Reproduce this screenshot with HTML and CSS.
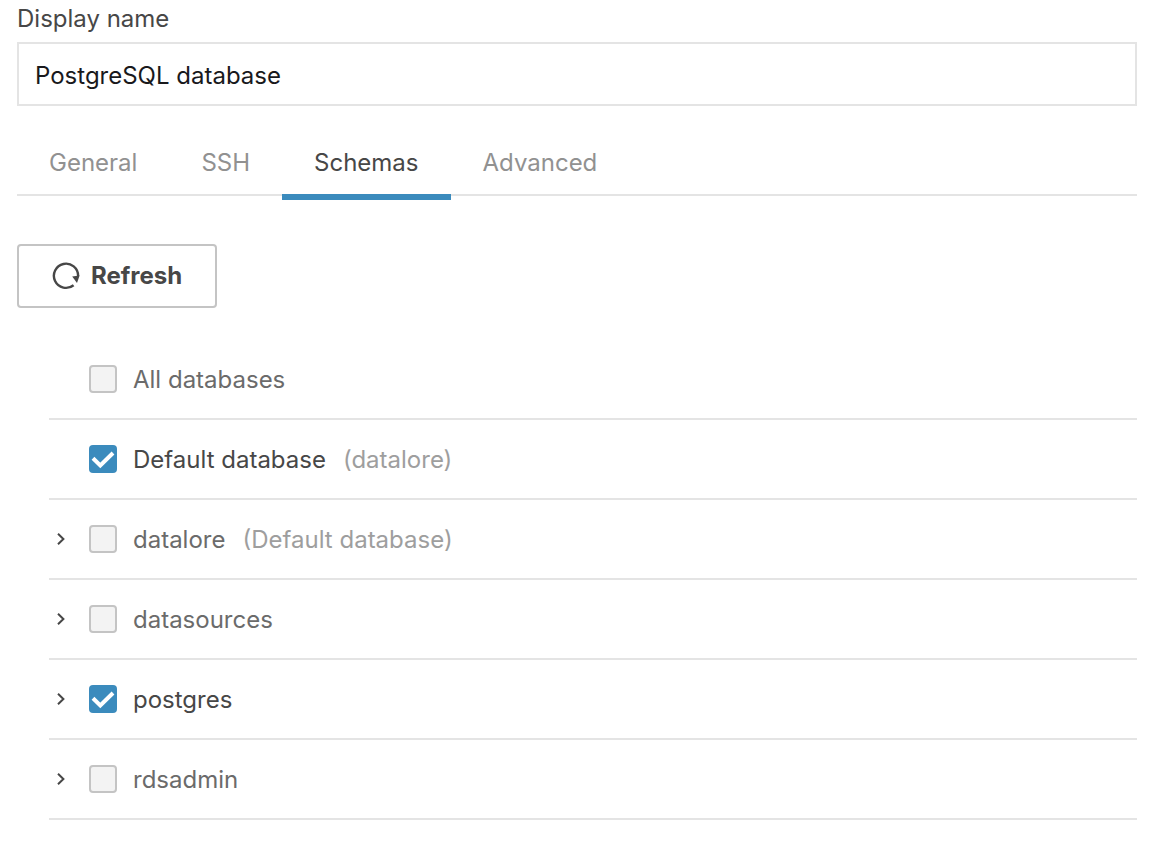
FILE: index.html
```html
<!DOCTYPE html>
<html lang="en">
<head>
<meta charset="utf-8">
<meta name="viewport" content="width=device-width, initial-scale=1">
<title>PostgreSQL database</title>
<link rel="stylesheet" href="styles.css">
</head>
<body>
<svg class="sprite" aria-hidden="true">
  <symbol id="chevron" viewBox="0 0 8 12"><path d="M1 .8 6.4 6 1 11.2" fill="none" stroke="currentColor" stroke-width="2"/></symbol>
</svg>
<main class="panel">
  <label class="field-label" for="display-name">Display name</label>
  <input class="field-input" id="display-name" type="text" value="PostgreSQL database">

  <div class="tabs" role="tablist">
    <button class="tab" type="button" role="tab" aria-selected="false">General</button>
    <button class="tab" type="button" role="tab" aria-selected="false">SSH</button>
    <button class="tab tab-active" type="button" role="tab" aria-selected="true">Schemas</button>
    <button class="tab" type="button" role="tab" aria-selected="false">Advanced</button>
  </div>

  <button class="refresh" type="button">
    <svg class="refresh-icon" viewBox="0 0 28 28" aria-hidden="true">
      <path d="M21.6 23.2A12.1 12.1 0 1 1 26.1 14" fill="none" stroke="currentColor" stroke-width="2.4"/>
      <path d="M20.2 14.4 27.6 13.4 25 21Z" fill="currentColor"/>
    </svg>
    Refresh
  </button>

  <ul class="schemas">
    <li class="row">
      <span class="toggle"></span>
      <input class="check" type="checkbox" id="db-all">
      <label class="name" for="db-all">All databases</label>
    </li>
    <li class="row">
      <span class="toggle"></span>
      <input class="check" type="checkbox" id="db-default" checked>
      <label class="name" for="db-default">Default database</label>
      <span class="note">(datalore)</span>
    </li>
    <li class="row">
      <button class="toggle" type="button" aria-label="Expand datalore"><svg class="chevron"><use href="#chevron"/></svg></button>
      <input class="check" type="checkbox" id="db-datalore">
      <label class="name" for="db-datalore">datalore</label>
      <span class="note">(Default database)</span>
    </li>
    <li class="row">
      <button class="toggle" type="button" aria-label="Expand datasources"><svg class="chevron"><use href="#chevron"/></svg></button>
      <input class="check" type="checkbox" id="db-datasources">
      <label class="name" for="db-datasources">datasources</label>
    </li>
    <li class="row">
      <button class="toggle" type="button" aria-label="Expand postgres"><svg class="chevron"><use href="#chevron"/></svg></button>
      <input class="check" type="checkbox" id="db-postgres" checked>
      <label class="name" for="db-postgres">postgres</label>
    </li>
    <li class="row">
      <button class="toggle" type="button" aria-label="Expand rdsadmin"><svg class="chevron"><use href="#chevron"/></svg></button>
      <input class="check" type="checkbox" id="db-rdsadmin">
      <label class="name" for="db-rdsadmin">rdsadmin</label>
    </li>
  </ul>
</main>
</body>
</html>
```

FILE: styles.css
```css
* {
  box-sizing: border-box;
}

body {
  margin: 0;
  background: #fff;
  color: #474747;
  font: 24px/32px Inter, "Liberation Sans", sans-serif;
}

button,
input {
  font: inherit;
  color: inherit;
}

.sprite {
  display: none;
}

.panel {
  display: flex;
  flex-direction: column;
  padding: 3px 31px 32px 17px;
}

.field-label {
  margin-bottom: 7px;
}

.field-input {
  width: 100%;
  height: 64px;
  padding: 2px 16px 0;
  border: 2px solid #e4e4e4;
  border-radius: 0;
  background: #fff;
  color: #19191c;
}

.tabs {
  display: flex;
  margin-top: 24px;
  border-bottom: 2px solid #e4e4e4;
}

.tab {
  height: 70px;
  margin-bottom: -6px;
  padding: 2px 32px 0;
  border: 0;
  border-bottom: 6px solid transparent;
  background: none;
  color: #919191;
}

.tab-active {
  border-bottom-color: #3b8bbd;
  color: #474747;
}

.refresh {
  display: flex;
  align-items: center;
  align-self: flex-start;
  gap: 11px;
  height: 64px;
  margin-top: 48px;
  padding: 0 33px;
  border: 2px solid #c4c4c4;
  border-radius: 4px;
  background: #fff;
  font-weight: 700;
}

.refresh-icon {
  width: 28px;
  height: 28px;
}

.schemas {
  margin: 32px 0 0 32px;
  padding: 0;
  list-style: none;
}

.row {
  display: flex;
  align-items: center;
  height: 80px;
  border-bottom: 2px solid #e4e4e4;
}

.toggle {
  display: grid;
  place-items: center;
  width: 24px;
  height: 24px;
  margin-right: 16px;
  padding: 0;
  border: 0;
  background: none;
}

.chevron {
  width: 8px;
  height: 12px;
}

.check {
  appearance: none;
  width: 28px;
  height: 28px;
  margin: 0 16px 0 0;
  border: 2px solid #c4c4c4;
  border-radius: 4px;
  background: #f3f3f3;
}

.check:checked {
  border: 0;
  background: #3b8bbd url("data:image/svg+xml,%3Csvg xmlns='http://www.w3.org/2000/svg' viewBox='0 0 28 28'%3E%3Cpath d='M4 13.3 11.3 20.4 24 8' fill='none' stroke='white' stroke-width='4'/%3E%3C/svg%3E");
}

.name,
.note {
  padding-top: 2px;
}

.name {
  color: #6b6b6b;
}

.check:checked + .name {
  color: #474747;
}

.note {
  margin-left: 17px;
  color: #9e9e9e;
}
```
